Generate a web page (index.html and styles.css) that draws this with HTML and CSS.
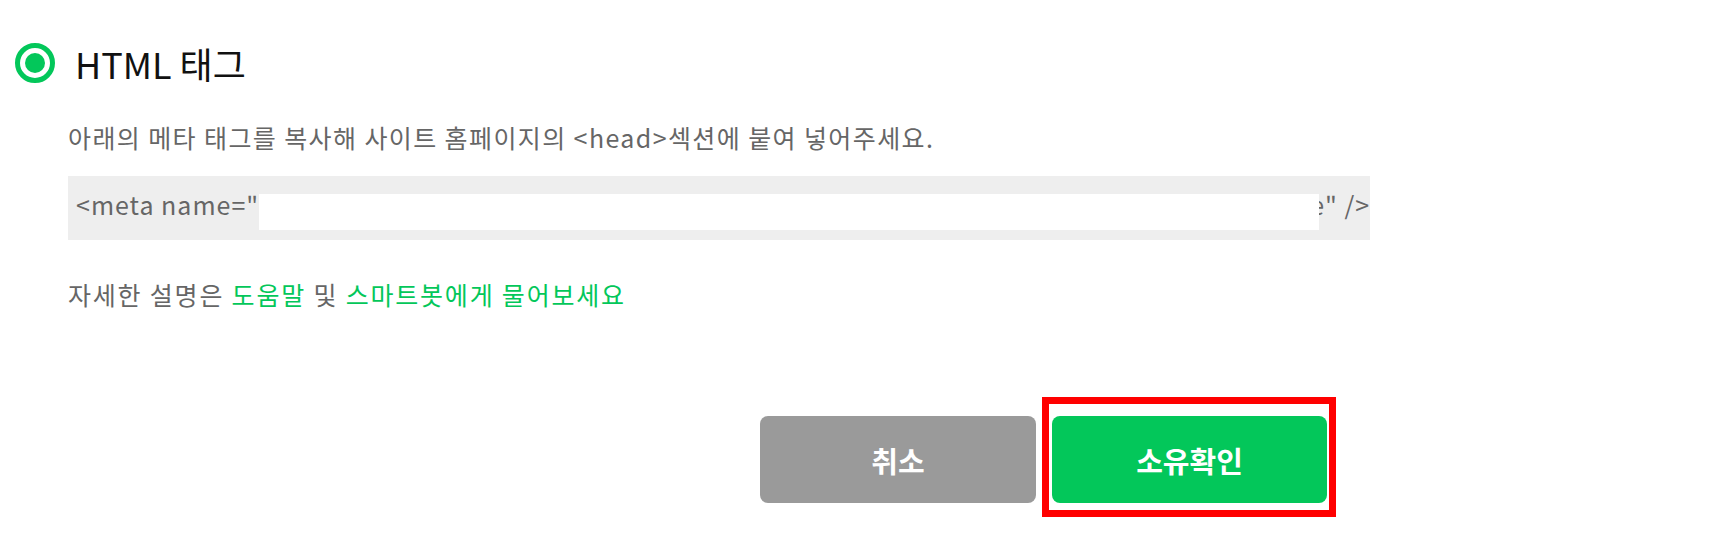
FILE: index.html
```html
<!DOCTYPE html>
<html>
<head lang="ko">
    <meta charset="UTF-8">
    <title>HTML 태그</title>
    <link rel="stylesheet" href="styles.css">
</head>
<body>

    <div class="verify">
        <label class="option">
            <span class="radio"><span class="dot"></span></span>
            <span class="option-name">HTML 태그</span>
        </label>

        <div class="option-body">
            <p class="desc">아래의 메타 태그를 복사해 사이트 홈페이지의 &lt;head&gt;섹션에 붙여 넣어주세요.</p>
            <div class="code">
                <span>&lt;meta name="</span>
                <span class="mask"></span>
                <span>e" /&gt;</span>
            </div>
            <p class="help">자세한 설명은 <a href="#">도움말</a> 및 <a href="#">스마트봇에게 물어보세요</a></p>
        </div>

        <div class="btns">
            <a class="btn btn-cancel" href="#">취소</a>
            <div class="mark-wrap">
                <a class="btn btn-ok" href="#">소유확인</a>
                <div class="mark"></div>
            </div>
        </div>
    </div>

</body>
</html>
```

FILE: styles.css
```css
* {
    padding: 0;
    margin: 0;
    box-sizing: border-box;
}
body {
    background: #fff;
    font-family: "Noto Sans CJK KR", "Noto Sans", sans-serif;
    color: #666;
}
a {
    text-decoration: none;
}
.verify {
    padding: 43px 0 49px;
}
.option {
    display: flex;
    align-items: center;
    padding-left: 15px;
    height: 40px;
}
.radio {
    display: flex;
    align-items: center;
    justify-content: center;
    width: 40px;
    height: 40px;
    border: 5px solid #03c75a;
    border-radius: 50%;
}
.dot {
    width: 20px;
    height: 20px;
    border-radius: 50%;
    background-color: #03c75a;
}
.option-name {
    margin-left: 20px;
    font-size: 36px;
    line-height: 40px;
    color: #111;
}
.option-body {
    padding-left: 68px;
}
.desc {
    margin-top: 36px;
    font-size: 25px;
    line-height: 36px;
    letter-spacing: 1.4px;
}
.code {
    display: flex;
    align-items: flex-start;
    width: 1302px;
    height: 64px;
    margin-top: 21px;
    padding: 10px 0 0 8px;
    background-color: #eee;
    font-size: 25px;
    line-height: 36px;
    letter-spacing: 1px;
    white-space: pre;
}
.mask {
    position: relative;
    z-index: 1;
    flex: none;
    width: 1060px;
    height: 36px;
    margin: 8px -9px 0 0;
    background-color: #fff;
}
.help {
    margin-top: 36px;
    font-size: 25px;
    line-height: 36px;
    letter-spacing: 1.8px;
}
.help a {
    color: #03c75a;
}
.btns {
    display: flex;
    gap: 16px;
    margin: 104px 0 0 760px;
}
.btn {
    display: flex;
    align-items: center;
    justify-content: center;
    width: 276px;
    height: 87px;
    border-radius: 8px;
    font-size: 29px;
    font-weight: bold;
    color: #fff;
}
.btn-cancel {
    background-color: #9a9a9a;
}
.btn-ok {
    width: 275px;
    background-color: #03c75a;
}
.mark-wrap {
    position: relative;
    height: 87px;
}
.mark {
    position: absolute;
    top: -19px;
    left: -10px;
    width: 294px;
    height: 120px;
    border: 7px solid #f00;
}
```
